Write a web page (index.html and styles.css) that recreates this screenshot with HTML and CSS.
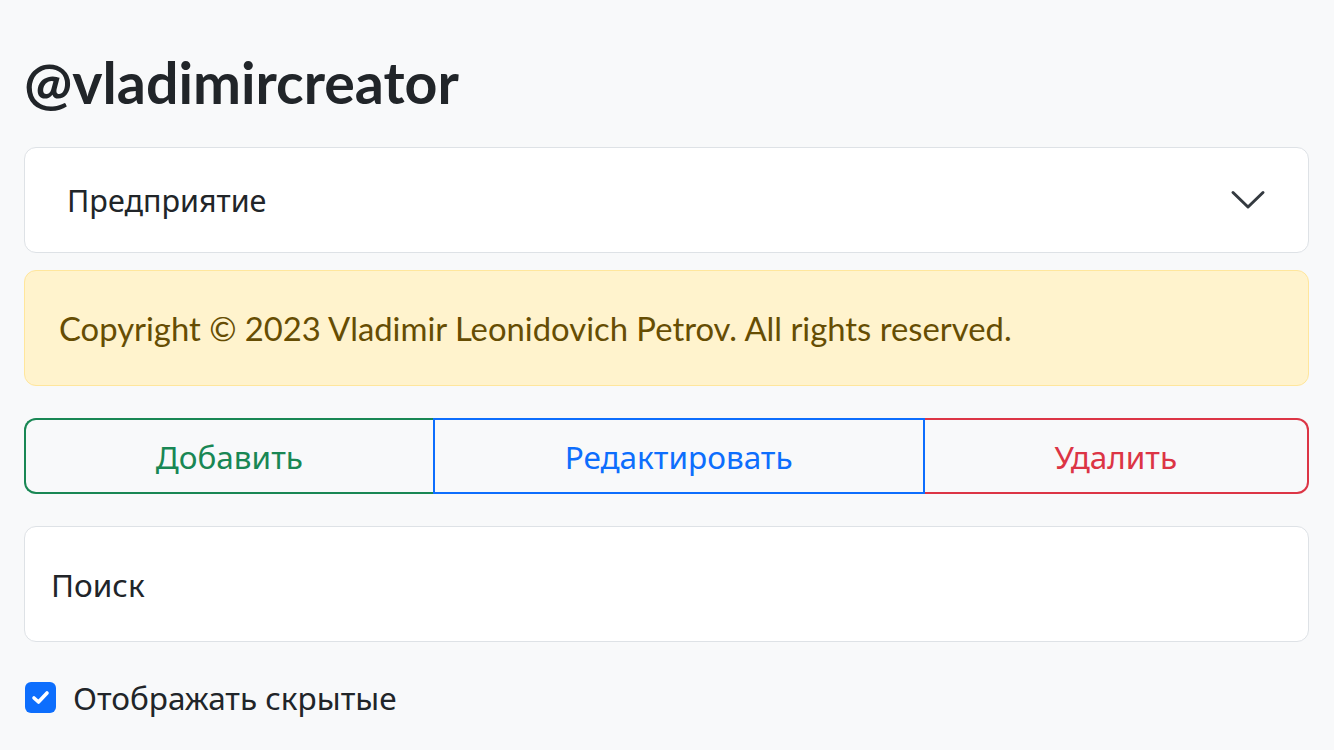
FILE: index.html
```html
<!DOCTYPE html>
<html lang="ru">
<head>
<meta charset="utf-8">
<link rel="stylesheet" href="styles.css">
</head>
<body>
<main class="page">
  <h1 class="title">@vladimircreator</h1>
  <div class="select">
    <span class="select-text cyr">Предприятие</span>
    <svg class="chevron" width="36" height="22" viewBox="0 0 36 22"><path d="M3 3.5 L18 18 L33 3.5" fill="none" stroke="#343a40" stroke-width="3" stroke-linecap="round" stroke-linejoin="round"/></svg>
  </div>
  <div class="alert">Copyright © 2023 Vladimir Leonidovich Petrov. All rights reserved.</div>
  <div class="btn-group">
    <button class="btn btn-add cyr">Добавить</button>
    <button class="btn btn-edit cyr">Редактировать</button>
    <button class="btn btn-del cyr">Удалить</button>
  </div>
  <div class="search cyr">Поиск</div>
  <label class="check">
    <span class="box"><svg width="31" height="31" viewBox="0 0 31 31"><path d="M9 16 L13.5 20 L22 11" fill="none" stroke="#fff" stroke-width="3.6" stroke-linecap="round" stroke-linejoin="round"/></svg></span>
    <span class="check-label cyr">Отображать скрытые</span>
  </label>
</main>
</body>
</html>
```
FILE: styles.css
```css
html, body {
  margin: 0;
  padding: 0;
}
body {
  background: #f8f9fa;
  font-family: Lato, "Noto Sans", sans-serif;
  color: #212529;
}
.cyr {
  font-family: "Noto Sans", "Open Sans", sans-serif;
}
.page {
  padding: 0 25px 0 24px;
  display: flex;
  flex-direction: column;
}
.title {
  margin: 49px 0 0 0;
  font-size: 57.3px;
  font-weight: 700;
  line-height: 66px;
  color: #212529;
  height: 66px;
}
.select {
  margin-top: 32px;
  height: 104px;
  background: #fff;
  border: 1px solid #dee2e6;
  border-radius: 12px;
  display: flex;
  align-items: center;
  justify-content: space-between;
  padding: 0 42px 0 42px;
  font-size: 30.5px;
  color: #212529;
}
.chevron {
  display: block;
}
.alert {
  margin-top: 17px;
  height: 116px;
  box-sizing: border-box;
  background: #fff3cd;
  border: 1px solid #ffe69c;
  border-radius: 12px;
  color: #664d03;
  font-size: 32.8px;
  display: flex;
  align-items: center;
  padding: 0 34px;
}
.btn-group {
  margin-top: 32px;
  display: flex;
  height: 76px;
}
.btn {
  flex: 1 1 auto;
  background: transparent;
  font-size: 31.5px;
  border: 2px solid;
  margin: 0;
  padding: 0 24px;
}
.btn-add {
  color: #198754;
  border-color: #198754;
  border-radius: 12px 0 0 12px;
  border-right: none;
}
.btn-edit {
  color: #0d6efd;
  border-color: #0d6efd;
}
.btn-del {
  color: #dc3545;
  border-color: #dc3545;
  border-left: none;
  border-radius: 0 12px 12px 0;
}
.search {
  margin-top: 32px;
  height: 116px;
  box-sizing: border-box;
  background: #fff;
  border: 1px solid #dee2e6;
  border-radius: 12px;
  display: flex;
  align-items: center;
  padding: 0 26px;
  font-size: 31.5px;
  color: #212529;
}
.check {
  margin-top: 34px;
  display: flex;
  align-items: center;
  gap: 17px;
  font-size: 31.5px;
  color: #212529;
}
.box {
  width: 31px;
  height: 31px;
  margin-left: 1px;
  border-radius: 6px;
  background: #0d6efd;
  display: flex;
  align-items: center;
  justify-content: center;
}
.box svg { display: block; }
```
